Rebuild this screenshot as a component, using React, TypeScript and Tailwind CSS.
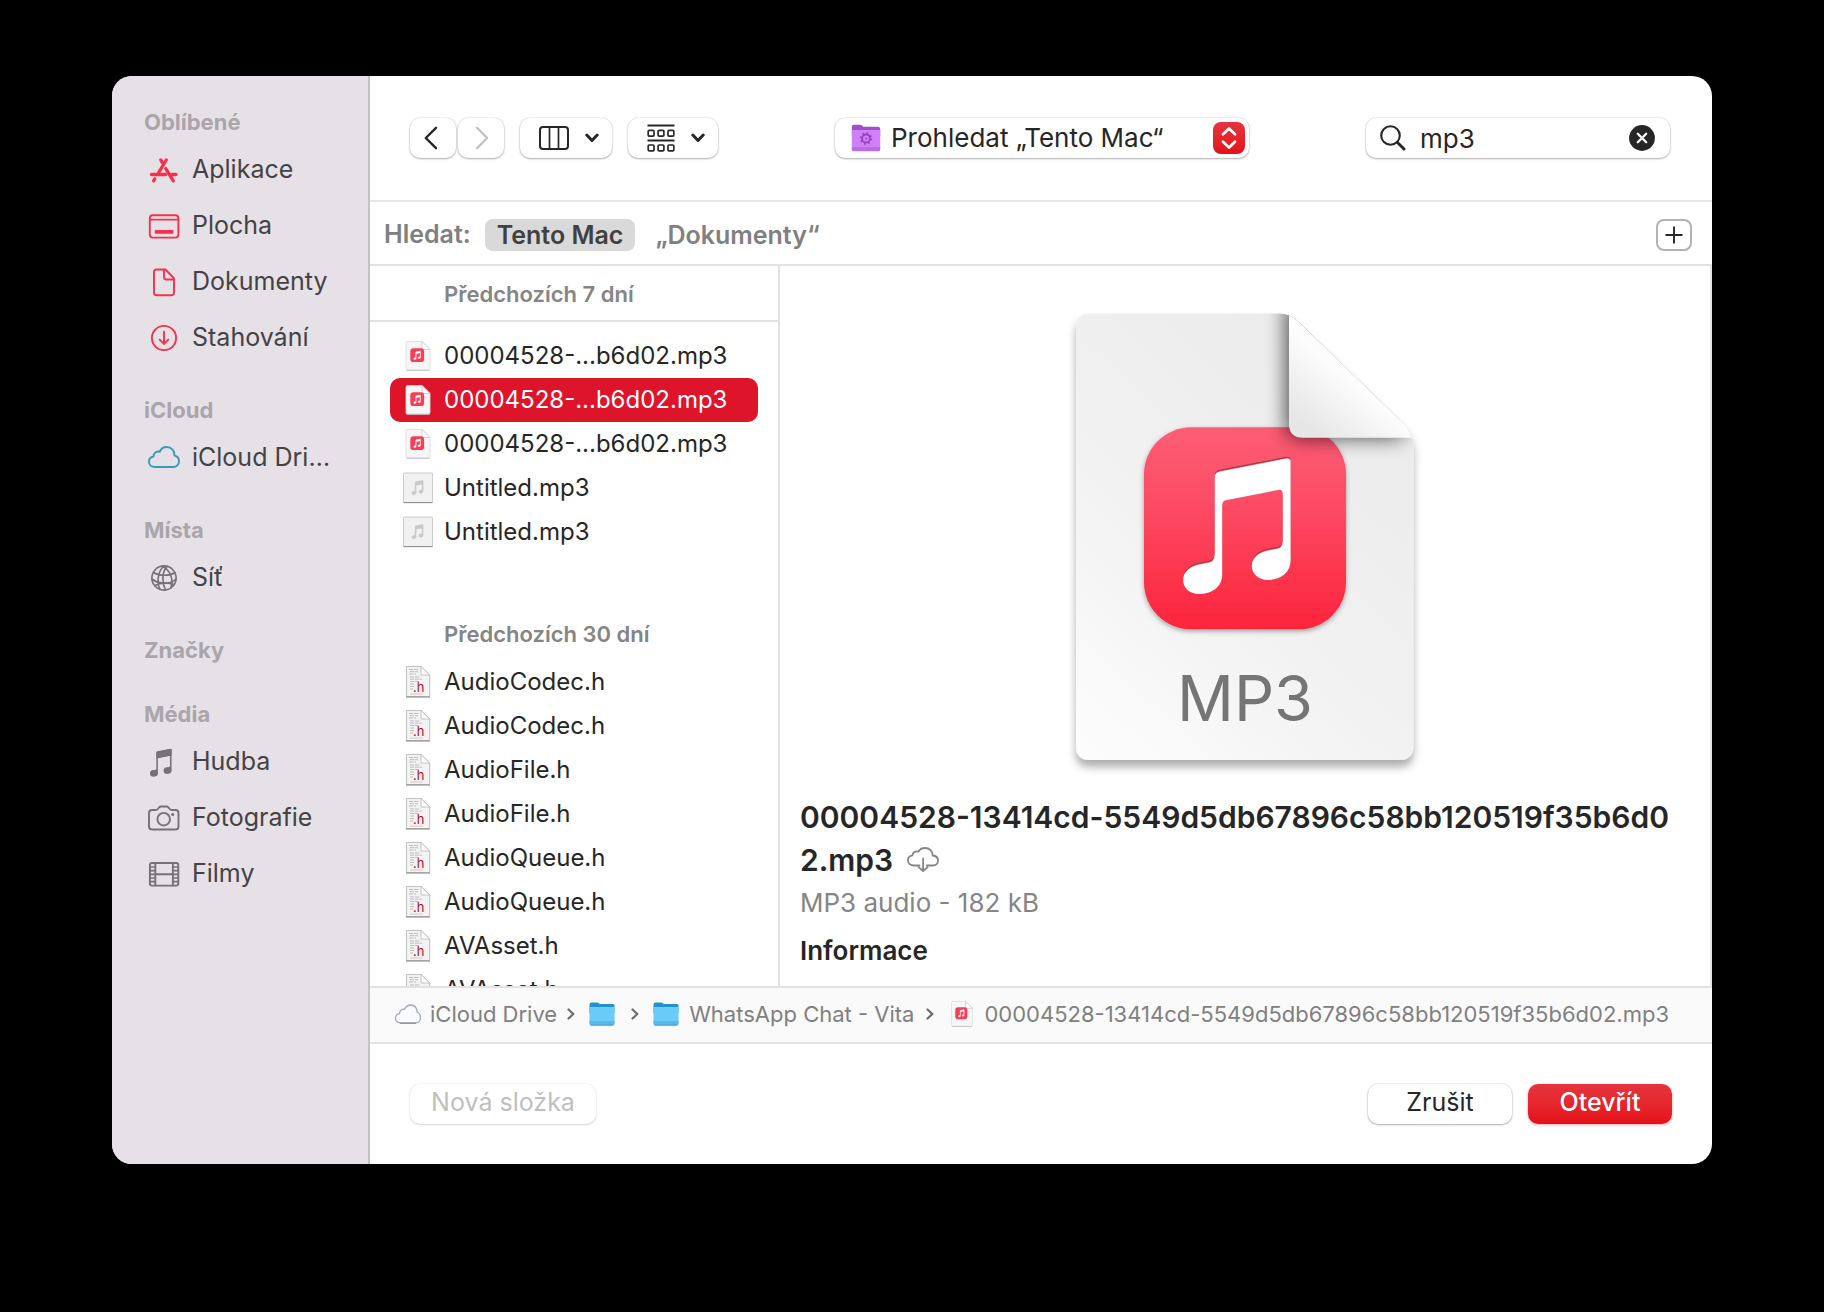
import { useState, type ReactNode } from "react";
import clsx from "clsx";

const NOTE_PATH =
  "M155 167.5 L221 154.6 Q225.7 153.7 225.7 158.5 V258 C225.7 271 215 278 203 278 C193 278 186.7 271.5 186.7 263.5 C186.7 254 193 248.5 203 246.5 L212 244.8 Q217.7 243.7 217.7 238 V192 Q217.7 187 213 188 L161 198.3 Q157.3 199 157.3 203 V272 C157.3 285 147 292 134 292 C124 292 118 285.5 118 277.5 C118 268 124.5 262.5 134 260.5 L143.5 258.7 Q149.7 257.5 149.7 251.5 V173.5 Q149.7 168.5 155 167.5Z";

const CLOUD_PATH =
  "M11 29 C7.300 29 5 26.700 5 23.700 C5 20.900 7 18.900 9.600 18.500 C9.300 15.200 12.600 12.700 15.600 13.800 C17 10.700 19.700 9 22.700 9 C27.300 9 30.600 12.600 30.500 17.500 C33.300 18.200 35 20.400 35 23.200 C35 26.500 32.500 29 29.300 29 Z";

function SidebarIcon({ children }: { children: ReactNode }) {
  return (
    <svg
      viewBox="0 0 40 40"
      className="size-10 shrink-0"
      fill="none"
      stroke="currentColor"
      strokeWidth="1.9"
      strokeLinecap="round"
      strokeLinejoin="round"
      aria-hidden="true"
    >
      {children}
    </svg>
  );
}

const icons: Record<string, ReactNode> = {
  apps: (
    <g strokeWidth="3.3">
      <path d="M22.300 10 L13.600 24.300" />
      <path d="M16.800 10 L18.300 12.600" />
      <path d="M21.800 18.600 L29.300 30.800" />
      <path d="M7.500 24.500 H21.500" />
      <path d="M27.600 24.500 H32" />
      <path d="M10.800 28.800 L9.600 30.800" />
    </g>
  ),
  desktop: (
    <>
      <rect x="5.800" y="9.200" width="28.600" height="22.400" rx="3" />
      <path d="M6 13.600 H34" strokeWidth="1.600" />
      <rect x="10.800" y="24" width="18.600" height="3.800" rx="0.800" fill="currentColor" stroke="none" />
    </>
  ),
  document: (
    <>
      <path d="M12.500 7.500 H21.500 L30 16.500 V30.500 Q30 33.300 27.200 33.300 H12.800 Q10 33.300 10 30.500 V10.300 Q10 7.500 12.500 7.500 Z" />
      <path d="M20 7.800 V15.300 Q20 17.500 22.200 17.500 H29.600" />
    </>
  ),
  download: (
    <>
      <circle cx="20" cy="20" r="12.100" />
      <path d="M20 13.800 V25.600" />
      <path d="M15.700 21.600 L20 25.900 L24.300 21.600" />
    </>
  ),
  cloud: <path d={CLOUD_PATH} />,
  globe: (
    <g strokeWidth="1.600">
      <circle cx="20" cy="20" r="12.100" />
      <path d="M20 8 C13 14 13 26 16 31.500" />
      <path d="M23 8.400 C17 15 18.500 26 21.500 32" />
      <path d="M18 8.200 C27 12 29.500 22 27 29.500" />
      <path d="M9.500 14.500 C16 18.500 26 18 31 14.500" />
      <path d="M8 21 C15 26.500 26 26.500 32 21" />
      <path d="M11 27.500 C17 24 25 24.500 30 26.500" />
    </g>
  ),
  music: (
    <g fill="currentColor" stroke="none">
      <path d={NOTE_PATH} transform="translate(-17.600 -23.800) scale(0.200)" />
      <path d="M12.400 10.500 Q12.400 9.500 13.400 9.300 L26.500 6.800 Q27.600 6.700 27.600 7.800 V13.600 L12.400 16.600 Z" />
      <ellipse cx="10" cy="31.200" rx="3.900" ry="3.200" />
      <ellipse cx="23.600" cy="28.400" rx="3.900" ry="3.200" />
    </g>
  ),
  camera: (
    <>
      <path d="M8 12 H11.800 Q13 12 13.800 11 L15 9.500 Q15.800 8.500 17 8.500 H22.500 Q23.700 8.500 24.500 9.500 L25.700 11 Q26.500 12 27.700 12 H31.500 Q34.500 12 34.500 15 V28.500 Q34.500 31.500 31.500 31.500 H8 Q5 31.500 5 28.500 V15 Q5 12 8 12 Z" />
      <circle cx="19.700" cy="21.200" r="6.300" />
      <circle cx="28.700" cy="16.400" r="1.500" fill="currentColor" stroke="none" />
    </>
  ),
  film: (
    <>
      <rect x="5.900" y="9" width="28.400" height="22.600" rx="2" />
      <path d="M11.300 9 V31.600 M28.900 9 V31.600 M11.300 20.300 H28.900" />
      <path d="M6 13 H11 M6 16.700 H11 M6 20.300 H11 M6 24 H11 M6 27.700 H11 M29 13 H34 M29 16.700 H34 M29 20.300 H34 M29 24 H34 M29 27.700 H34" strokeWidth="1.700" />
    </>
  ),
};

const sections = [
  {
    title: "Oblíbené",
    color: "text-[#f8304b]",
    items: [
      { label: "Aplikace", icon: "apps" },
      { label: "Plocha", icon: "desktop" },
      { label: "Dokumenty", icon: "document" },
      { label: "Stahování", icon: "download" },
    ],
  },
  {
    title: "iCloud",
    color: "text-[#3a9ab8]",
    items: [{ label: "iCloud Dri…", icon: "cloud" }],
  },
  {
    title: "Místa",
    color: "text-[#757177]",
    items: [{ label: "Síť", icon: "globe" }],
  },
  { title: "Značky", color: "text-[#757177]", items: [] },
  {
    title: "Média",
    color: "text-[#757177]",
    items: [
      { label: "Hudba", icon: "music" },
      { label: "Fotografie", icon: "camera" },
      { label: "Filmy", icon: "film" },
    ],
  },
];

const recentFiles = [
  { name: "00004528-...b6d02.mp3", kind: "mp3" },
  { name: "00004528-...b6d02.mp3", kind: "mp3" },
  { name: "00004528-...b6d02.mp3", kind: "mp3" },
  { name: "Untitled.mp3", kind: "audio" },
  { name: "Untitled.mp3", kind: "audio" },
];

const olderFiles = [
  "AudioCodec.h",
  "AudioCodec.h",
  "AudioFile.h",
  "AudioFile.h",
  "AudioQueue.h",
  "AudioQueue.h",
  "AVAsset.h",
  "AVAsset.h",
].map((name) => ({ name, kind: "header" }));

function Mp3Icon({ className }: { className?: string }) {
  return (
    <svg viewBox="0 0 32 32" className={clsx("shrink-0", className)} aria-hidden="true">
      <path
        d="M5.500 1.500 H20 L28 9.500 V28.500 Q28 30 26.500 30 H5.500 Q4 30 4 28.500 V3 Q4 1.500 5.500 1.500 Z"
        fill="#f6f6f6"
        stroke="#dcdcdc"
        strokeWidth="0.800"
      />
      <path d="M4.500 30.300 H27.500" stroke="#c4c4c4" strokeWidth="1" />
      <path d="M20 1.500 V9.500 H28 Z" fill="#ffffff" stroke="#c9c9c9" strokeWidth="0.800" />
      <rect x="8.300" y="8.300" width="13.800" height="13.800" rx="3.200" fill="#f73e58" />
      <path d={NOTE_PATH} transform="translate(4.300 1.150) scale(0.063)" fill="#fff" stroke="#fff" strokeWidth="5" />
    </svg>
  );
}

function AudioIcon() {
  return (
    <svg viewBox="0 0 32 32" className="size-8 shrink-0" aria-hidden="true">
      <rect x="1.500" y="1" width="29" height="29.500" rx="0.800" fill="#f1f1f1" stroke="#c6c6c6" strokeWidth="0.900" />
      <path d="M1.500 30.600 H30.500" stroke="#8f8f8f" strokeWidth="1.100" />
      <path d={NOTE_PATH} transform="translate(-2.200 -7.400) scale(0.103)" fill="#c9c9c9" stroke="#c9c9c9" strokeWidth="7" />
    </svg>
  );
}

function HeaderIcon() {
  return (
    <svg viewBox="0 0 32 32" className="size-8 shrink-0" aria-hidden="true">
      <path d="M4.500 0.500 H19 L27.700 9 V30.500 H4.500 Z" fill="#f3f3f3" stroke="#b9b9b9" strokeWidth="0.900" />
      <path d="M4 31 H28" stroke="#8c8c8c" strokeWidth="1.100" />
      <path d="M19 0.500 V9 H27.700 Z" fill="#ffffff" stroke="#b4b4b4" strokeWidth="0.800" />
      <path
        d="M7 3.500 H17 M8 5.700 H16 M7 8 H14 M8 11 H18 M8 13.200 H20 M8 15.500 H17 M8 18 H13 M8 20.500 H12 M8 23 H11"
        stroke="#b5b5b5"
        strokeWidth="0.900"
        strokeDasharray="4 0.800"
      />
      <path d="M8 28 H21" stroke="#e3b9be" strokeWidth="0.800" />
      <text x="11" y="25.500" fontSize="13" fontFamily="Inter, sans-serif" fill="#a8142a">
        .h
      </text>
    </svg>
  );
}

function FileIcon({ kind }: { kind: string }) {
  if (kind === "mp3") return <Mp3Icon className="size-8" />;
  if (kind === "audio") return <AudioIcon />;
  return <HeaderIcon />;
}

function FileRow({
  name,
  kind,
  selected,
  onSelect,
}: {
  name: string;
  kind: string;
  selected: boolean;
  onSelect: () => void;
}) {
  return (
    <li>
      <button
        type="button"
        onClick={onSelect}
        className={clsx(
          "flex h-11 w-full items-center gap-2.5 rounded-[10px] pl-3 text-left text-2xl whitespace-nowrap",
          selected ? "bg-[#de142b] text-white" : "text-[#262626]"
        )}
      >
        <FileIcon kind={kind} />
        {name}
      </button>
    </li>
  );
}

function FolderIcon() {
  return (
    <svg viewBox="0 0 26 26" className="size-[26px] shrink-0" aria-hidden="true">
      <path d="M0.500 3.500 Q0.500 1.500 2.500 1.500 H8 Q9 1.500 9.800 2.300 L10.500 3 H24 Q25.500 3 25.500 4.500 V12 H0.500 Z" fill="#1f93cc" />
      <path d="M0.500 6 H25.500 V22.500 Q25.500 24 24 24 H2 Q0.500 24 0.500 22.500 Z" fill="#6bcbf8" />
      <path d="M0.500 20 H25.500 V22.500 Q25.500 24.200 24 24.200 H2 Q0.500 24.200 0.500 22.500 Z" fill="#5bb9e8" />
      <path d="M1.500 24.200 H24.500" stroke="#3f94bf" strokeWidth="0.900" />
    </svg>
  );
}

function SmartFolderIcon() {
  return (
    <svg viewBox="0 0 30 28" className="h-7 w-[30px] shrink-0" aria-hidden="true">
      <path d="M0.800 3 Q0.800 0.800 3 0.800 H9 Q10.200 0.800 11 1.600 L12.200 2.800 H27 Q29.200 2.800 29.200 5 V12 H0.800 Z" fill="#a14fc4" />
      <path d="M0.800 6 H29.200 V25 Q29.200 27 27.200 27 H2.800 Q0.800 27 0.800 25 Z" fill="#cf80f8" />
      <path d="M0.800 23 H29.200 V25 Q29.200 27.200 27.200 27.200 H2.800 Q0.800 27.200 0.800 25 Z" fill="#b86ee0" />
      <circle cx="15" cy="14.500" r="4" fill="none" stroke="#9743c0" strokeWidth="1.800" />
      <circle cx="15" cy="14.500" r="5.400" fill="none" stroke="#9743c0" strokeWidth="1.700" strokeDasharray="1.700 2.541" />
      <circle cx="15" cy="14.500" r="1" fill="#9743c0" />
    </svg>
  );
}

function Chevron() {
  return (
    <svg viewBox="0 0 14 10" className="h-2.5 w-3.5" fill="none" aria-hidden="true">
      <path d="M1.800 2 L7 7.500 L12.200 2" stroke="#262626" strokeWidth="3" strokeLinecap="round" strokeLinejoin="round" />
    </svg>
  );
}

function PathArrow() {
  return (
    <svg viewBox="0 0 8 12" className="h-3 w-2 shrink-0" fill="none" aria-hidden="true">
      <path d="M1.500 1.500 L6.300 6 L1.500 10.500" stroke="#6e6e6e" strokeWidth="2.300" strokeLinecap="round" strokeLinejoin="round" />
    </svg>
  );
}

const buttonShadow =
  "bg-white shadow-[0_0_2px_rgba(0,0,0,0.2),0_1px_2px_rgba(0,0,0,0.28)]";

function Sidebar() {
  return (
    <nav className="w-[258px] shrink-0 border-r-2 border-[#c5c1c6] bg-[#e6e1e7] pt-0.5">
      {sections.map((section) => (
        <section key={section.title}>
          <h2 className="h-16 pt-7 pl-8 text-[22px] leading-8 font-bold text-[#aaa5ab]">
            {section.title}
          </h2>
          <ul>
            {section.items.map((item) => (
              <li key={item.label}>
                <a href="#" className="flex h-14 items-center gap-2 pl-8 text-[25px] whitespace-nowrap text-[#454246]">
                  <span className={section.color}>
                    <SidebarIcon>{icons[item.icon]}</SidebarIcon>
                  </span>
                  {item.label}
                </a>
              </li>
            ))}
          </ul>
        </section>
      ))}
    </nav>
  );
}

function Toolbar() {
  const [query, setQuery] = useState("mp3");

  return (
    <header className="flex h-[126px] items-center justify-between border-b-2 border-[#e5e5e5] pr-[42px] pl-10">
      <div className="flex gap-4">
        <div className="flex gap-0.5">
          <button type="button" aria-label="Zpět" className={clsx("flex h-10 w-[46px] items-center justify-center rounded-[10px] pr-1", buttonShadow)}>
            <svg viewBox="0 0 14 24" className="h-6 w-3.5" fill="none" aria-hidden="true">
              <path d="M12 1.800 L1.800 12 L12 22.200" stroke="#262626" strokeWidth="2.400" strokeLinecap="round" strokeLinejoin="round" />
            </svg>
          </button>
          <button type="button" aria-label="Vpřed" disabled className={clsx("flex h-10 w-[46px] items-center justify-center rounded-[10px] pl-0.5", buttonShadow)}>
            <svg viewBox="0 0 14 24" className="h-6 w-3.5" fill="none" aria-hidden="true">
              <path d="M2 1.800 L12.200 12 L2 22.200" stroke="#c0c0c0" strokeWidth="2.200" strokeLinecap="round" strokeLinejoin="round" />
            </svg>
          </button>
        </div>
        <button type="button" aria-label="Zobrazení" className={clsx("flex h-10 w-[92px] items-center justify-center gap-4 rounded-[10px] pl-1.5", buttonShadow)}>
          <svg viewBox="0 0 30 24" className="h-6 w-[30px]" fill="none" stroke="#262626" aria-hidden="true">
            <rect x="1" y="1" width="28" height="22" rx="3" strokeWidth="2" />
            <path d="M10.500 1 V23 M19.500 1 V23" strokeWidth="1.700" />
          </svg>
          <Chevron />
        </button>
        <button type="button" aria-label="Seskupit" className={clsx("flex h-10 w-[90px] items-center justify-center gap-4 rounded-[10px] pl-1.5", buttonShadow)}>
          <svg viewBox="0 0 28 28" className="size-7" fill="none" stroke="#262626" strokeWidth="1.700" aria-hidden="true">
            <path d="M0.500 1.500 H27.500 M0.500 16.500 H27.500" strokeWidth="1.800" />
            <rect x="1.200" y="6.300" width="5.800" height="5.800" rx="1" />
            <rect x="11.100" y="6.300" width="5.800" height="5.800" rx="1" />
            <rect x="21" y="6.300" width="5.800" height="5.800" rx="1" />
            <rect x="1.200" y="21" width="5.800" height="5.800" rx="1" />
            <rect x="11.100" y="21" width="5.800" height="5.800" rx="1" />
            <rect x="21" y="21" width="5.800" height="5.800" rx="1" />
          </svg>
          <Chevron />
        </button>
      </div>

      <div className={clsx("flex h-10 w-[414px] items-center rounded-[10px] pr-1 pl-4", buttonShadow)}>
        <SmartFolderIcon />
        <select
          aria-label="Umístění"
          className="ml-2.5 min-w-0 grow appearance-none bg-transparent text-[26px] leading-9 text-[#262626] outline-none"
        >
          <option>Prohledat „Tento Mac“</option>
        </select>
        <span className="pointer-events-none flex size-8 items-center justify-center rounded-lg bg-linear-to-b from-[#e6333c] to-[#e40f19]">
          <svg viewBox="0 0 16 24" className="h-6 w-4" fill="none" stroke="#fff" strokeWidth="2.800" strokeLinecap="round" strokeLinejoin="round" aria-hidden="true">
            <path d="M2 8.200 L8 2.500 L14 8.200" />
            <path d="M2 15.800 L8 21.500 L14 15.800" />
          </svg>
        </span>
      </div>

      <div className={clsx("flex h-10 w-[304px] items-center rounded-[10px] pr-[15px] pl-3.5", buttonShadow)}>
        <label htmlFor="search" className="shrink-0">
          <span className="sr-only">Hledat</span>
          <svg viewBox="0 0 26 26" className="size-[26px]" fill="none" stroke="#262626" aria-hidden="true">
            <circle cx="10.500" cy="10.500" r="9.300" strokeWidth="2.100" />
            <path d="M17.500 17.500 L24 24" strokeWidth="2.900" strokeLinecap="round" />
          </svg>
        </label>
        <input
          id="search"
          type="text"
          value={query}
          onChange={(e) => setQuery(e.target.value)}
          className="ml-3.5 min-w-0 grow bg-transparent pt-0.5 text-[26px] leading-9 text-[#262626] outline-none"
        />
        <button type="button" aria-label="Vymazat" onClick={() => setQuery("")}>
          <svg viewBox="0 0 26 26" className="size-[26px]" aria-hidden="true">
            <circle cx="13" cy="13" r="12.900" fill="#262626" />
            <path d="M8.800 8.800 L17.200 17.200 M17.200 8.800 L8.800 17.200" stroke="#fff" strokeWidth="2.300" strokeLinecap="round" />
          </svg>
        </button>
      </div>
    </header>
  );
}

function ScopeBar() {
  return (
    <div className="flex h-16 items-center border-b-2 border-[#e2e2e2] pt-1 pr-5 pl-3.5 text-[25px] font-semibold text-[#808080]">
      <span>Hledat:</span>
      <button type="button" className="ml-3.5 h-8 rounded-lg bg-[#d9d9d9] px-3 leading-8 text-[#404040]">
        Tento Mac
      </button>
      <button type="button" className="ml-2 h-8 px-3 leading-8">
        „Dokumenty“
      </button>
      <button
        type="button"
        aria-label="Přidat kritérium"
        className="ml-auto flex h-8 w-9 items-center justify-center rounded-lg border-2 border-[#b2b2b2]"
      >
        <svg viewBox="0 0 18 18" className="size-[18px]" aria-hidden="true">
          <path d="M9 0.500 V17.500 M0.500 9 H17.500" stroke="#262626" strokeWidth="1.900" />
        </svg>
      </button>
    </div>
  );
}

function FileList() {
  const [selected, setSelected] = useState(1);

  return (
    <div className="flex w-[410px] shrink-0 flex-col border-r-2 border-[#e2e2e2]">
      <h3 className="flex h-14 items-center border-b-2 border-[#e2e2e2] pt-0.5 pl-[74px] text-[22px] font-semibold text-[#858585]">
        Předchozích 7 dní
      </h3>
      <div className="h-0 grow overflow-hidden px-5 pt-3">
        <ul>
          {recentFiles.map((file, i) => (
            <FileRow key={i} {...file} selected={selected === i} onSelect={() => setSelected(i)} />
          ))}
        </ul>
        <h3 className="mt-[54px] pl-[54px] text-[22px] leading-[52px] font-semibold text-[#858585]">
          Předchozích 30 dní
        </h3>
        <ul>
          {olderFiles.map((file, i) => {
            const index = recentFiles.length + i;
            return (
              <FileRow key={index} {...file} selected={selected === index} onSelect={() => setSelected(index)} />
            );
          })}
        </ul>
      </div>
    </div>
  );
}

function Mp3Artwork() {
  const page =
    "M25 11.500 H214 Q225 11.500 233.500 19.700 L338.500 121.500 Q348.300 131 348.300 144 V444 Q348.300 458 334.300 458 H25 Q11 458 11 444 V25.500 Q11 11.500 25 11.500 Z";
  const flap =
    "M224 13.500 Q229 15.500 233.500 19.700 L338.500 121.500 Q344.500 127.500 346.700 135.700 H238 Q224 135.700 224 121.700 Z";

  return (
    <svg viewBox="0 0 360 480" className="mx-auto h-[480px] w-[360px]" role="img" aria-label="MP3">
      <defs>
        <linearGradient id="page" x1="0" y1="1" x2="0.700" y2="0">
          <stop offset="0" stopColor="#fdfdfd" />
          <stop offset="0.450" stopColor="#f2f2f2" />
          <stop offset="1" stopColor="#ebebeb" />
        </linearGradient>
        <linearGradient id="flap" x1="0.700" y1="0.350" x2="0.200" y2="0.950">
          <stop offset="0" stopColor="#ffffff" />
          <stop offset="0.350" stopColor="#fcfcfc" />
          <stop offset="1" stopColor="#e6e6e6" />
        </linearGradient>
        <linearGradient id="tile" x1="0" y1="0" x2="0" y2="1">
          <stop offset="0" stopColor="#fe5d76" />
          <stop offset="0.350" stopColor="#fd4d66" />
          <stop offset="1" stopColor="#fc243c" />
        </linearGradient>
        <filter id="page-shadow" x="-10%" y="-10%" width="120%" height="120%">
          <feDropShadow dx="0" dy="7" stdDeviation="4" floodColor="#000" floodOpacity="0.320" />
        </filter>
        <filter id="tile-shadow" x="-10%" y="-10%" width="120%" height="120%">
          <feDropShadow dx="0" dy="2" stdDeviation="2.500" floodColor="#000" floodOpacity="0.350" />
        </filter>
        <filter id="blur" x="-40%" y="-40%" width="180%" height="180%">
          <feGaussianBlur stdDeviation="10" />
        </filter>
        <filter id="soft" x="-10%" y="-10%" width="120%" height="120%">
          <feGaussianBlur stdDeviation="0.700" />
        </filter>
        <clipPath id="page-clip">
          <path d={page} />
        </clipPath>
        <clipPath id="note-clip">
          <path d={NOTE_PATH} />
        </clipPath>
      </defs>
      <path d={page} fill="url(#page)" filter="url(#page-shadow)" />
      <rect x="79" y="125.300" width="202" height="202" rx="47" fill="url(#tile)" filter="url(#tile-shadow)" />
      <g clipPath="url(#note-clip)">
        <path d={NOTE_PATH} fill="#b03a4a" />
        <path d={NOTE_PATH} transform="translate(0 2.200)" fill="#fff" stroke="#fff" strokeWidth="0.600" filter="url(#soft)" />
      </g>
      <g clipPath="url(#page-clip)">
        <path d="M221 -10 L338 124 V136 H236 Q221 136 221 122 Z" fill="#000" opacity="0.680" filter="url(#blur)" />
      </g>
      <path d={flap} fill="url(#flap)" />
      <text x="180" y="419" textAnchor="middle" fontSize="63" fontFamily="Inter, sans-serif" fill="#757575">
        MP3
      </text>
    </svg>
  );
}

function Preview() {
  return (
    <section className="min-w-0 grow border-r-2 border-[#e5e5e5] pt-9 pr-7 pb-3.5 pl-5">
      <div className="pl-2">
        <Mp3Artwork />
      </div>
      <h1 className="mt-3.5 text-[30px] leading-[43px] font-semibold break-all text-[#262626]">
        00004528-13414cd-5549d5db67896c58bb120519f35b6d02.mp3
        <svg viewBox="0 0 32 26" className="ml-3.5 inline h-[26px] w-8 align-[-2px]" fill="none" stroke="#858585" strokeWidth="1.800" strokeLinecap="round" strokeLinejoin="round" aria-hidden="true">
          <path d="M12.500 18.500 H7 C3.500 18.500 1 16.400 1 13.300 C1 10.700 2.900 8.700 5.500 8.300 C5.600 5.200 8.800 3.500 11.400 4.800 C12.700 2.300 15.200 1 18 1 C22.600 1 25.700 4.300 25.700 8.500 C29 8.800 31 10.800 31 13.500 C31 16.500 28.800 18.500 26 18.500 H19.800" />
          <path d="M16.100 11.500 V24 M11.600 20 L16.100 24.200 L20.600 20" />
        </svg>
      </h1>
      <p className="text-[26px] leading-[42px] text-[#858585]">MP3 audio - 182 kB</p>
      <h2 className="mt-1.5 text-[26px] leading-[42px] font-semibold text-[#262626]">Informace</h2>
    </section>
  );
}

function PathBar() {
  return (
    <div className="flex h-[58px] items-center overflow-hidden border-y-2 border-[#e2e2e2] bg-[#fbfafa] pb-0.5 pl-6 text-[22px] whitespace-nowrap text-[#808080]">
      <svg viewBox="0 0 28 22" className="h-[22px] w-7 shrink-0" aria-hidden="true">
        <path
          d="M7 20 C3.500 20 1.500 17.800 1.500 15.200 C1.500 12.700 3.200 11 5.500 10.600 C5.500 7.500 8 5.700 10.500 6.300 C11.800 3.500 14.200 2 16.800 2 C20.500 2 23.200 5 23.100 9 C25.300 10 26.500 12 26.500 14.500 C26.500 17.700 24.200 20 21.200 20 Z"
          fill="#f8fafd"
          stroke="#a3a8b2"
          strokeWidth="1.300"
        />
        <path d="M6 20.300 H22" stroke="#8d929c" strokeWidth="1.200" />
      </svg>
      <span className="mr-2.5 ml-2">iCloud Drive</span>
      <PathArrow />
      <span className="mr-4 ml-3.5 flex">
        <FolderIcon />
      </span>
      <PathArrow />
      <span className="mr-2.5 ml-3.5 flex">
        <FolderIcon />
      </span>
      <span className="mr-3">WhatsApp Chat - Vita</span>
      <PathArrow />
      <Mp3Icon className="mr-2 ml-3.5 size-7" />
      <span>00004528-13414cd-5549d5db67896c58bb120519f35b6d02.mp3</span>
    </div>
  );
}

function Footer() {
  return (
    <footer className="flex h-[120px] items-center px-10 text-[25px]">
      <button
        type="button"
        disabled
        className="h-10 w-[186px] rounded-[10px] bg-white pb-0.5 text-[#bfbfbf] shadow-[0_0_2px_rgba(0,0,0,0.12),0_1px_2px_rgba(0,0,0,0.14)]"
      >
        Nová složka
      </button>
      <button type="button" className={clsx("ml-auto h-10 w-36 rounded-[10px] pb-0.5 text-[#262626]", buttonShadow)}>
        Zrušit
      </button>
      <button
        type="button"
        className="ml-4 h-10 w-36 rounded-[10px] bg-linear-to-b from-[#e6343c] to-[#e50e18] pb-0.5 font-medium text-white shadow-[0_1px_3px_rgba(229,14,24,0.35)]"
      >
        Otevřít
      </button>
    </footer>
  );
}

export default function App() {
  return (
    <main className="min-h-screen bg-black px-28 pt-[76px] pb-[148px] font-['Inter','Liberation_Sans',sans-serif]">
      <div className="flex overflow-hidden rounded-[20px] bg-white">
        <Sidebar />
        <div className="flex min-w-0 grow flex-col">
          <Toolbar />
          <ScopeBar />
          <div className="flex">
            <FileList />
            <Preview />
          </div>
          <PathBar />
          <Footer />
        </div>
      </div>
    </main>
  );
}
